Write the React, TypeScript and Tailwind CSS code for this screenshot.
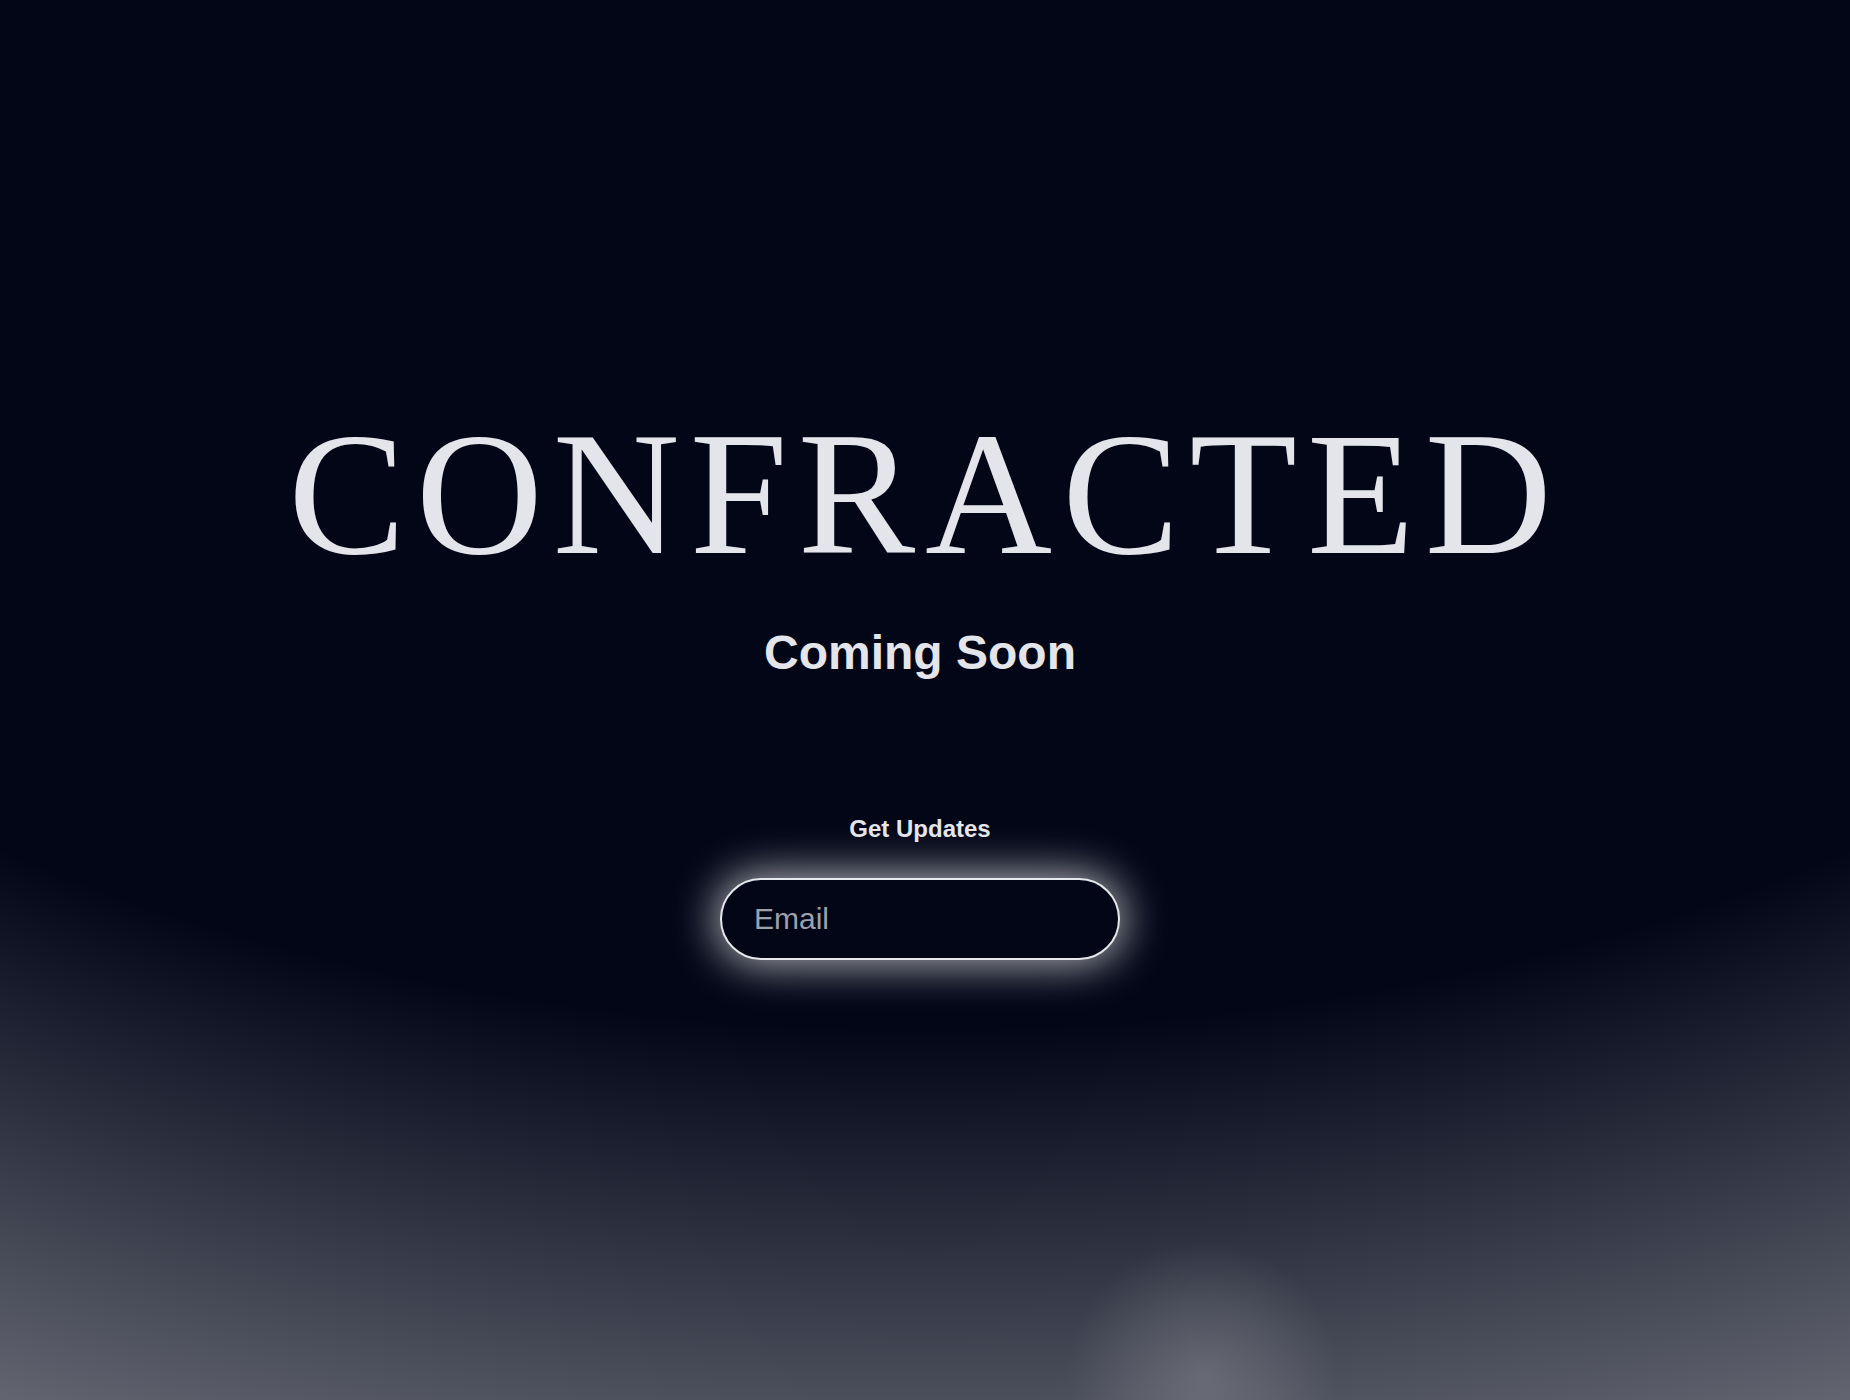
const App = () => {
  return (
    <div className="min-h-screen w-full bg-[#020617] bg-[image:radial-gradient(circle_at_1203px_1375px,rgba(255,255,255,0.17)_0px,rgba(255,255,255,0.09)_70px,rgba(255,255,255,0)_135px),radial-gradient(ellipse_130%_108%_at_50%_0%,#020617_68%,#626470_100%)]">
      <main className="flex flex-col items-center pt-[406px] pr-[10px] pb-[200px]">
        {/* Wordmark */}
        <h1 className="mr-[-10px] font-['Liberation_Serif','Times_New_Roman',serif] text-[176px] leading-none font-normal tracking-[10px] text-[#e4e5ea]">
          CONFRACTED
        </h1>

        <h2 className="mt-[47px] font-['Liberation_Sans',Arial,sans-serif] text-5xl leading-none font-bold text-[#e4e5ea]">
          Coming Soon
        </h2>

        {/* Signup */}
        <form
          className="mt-[140px] flex flex-col items-center"
          onSubmit={(e) => e.preventDefault()}
        >
          <label
            htmlFor="email"
            className="font-['Liberation_Sans',Arial,sans-serif] text-2xl leading-none font-bold text-[#e4e5ea]"
          >
            Get Updates
          </label>
          <input
            id="email"
            type="email"
            placeholder="Email"
            className="mt-[37px] h-[82px] w-[400px] rounded-full border-2 border-[#e5e7eb] bg-[#020617] px-8 font-['Liberation_Sans',Arial,sans-serif] text-3xl text-gray-200 placeholder:text-[#9ea1ad] shadow-[0_0_44px_4px_rgba(255,255,255,0.7)] outline-none"
          />
        </form>
      </main>
    </div>
  );
};

export default App;
